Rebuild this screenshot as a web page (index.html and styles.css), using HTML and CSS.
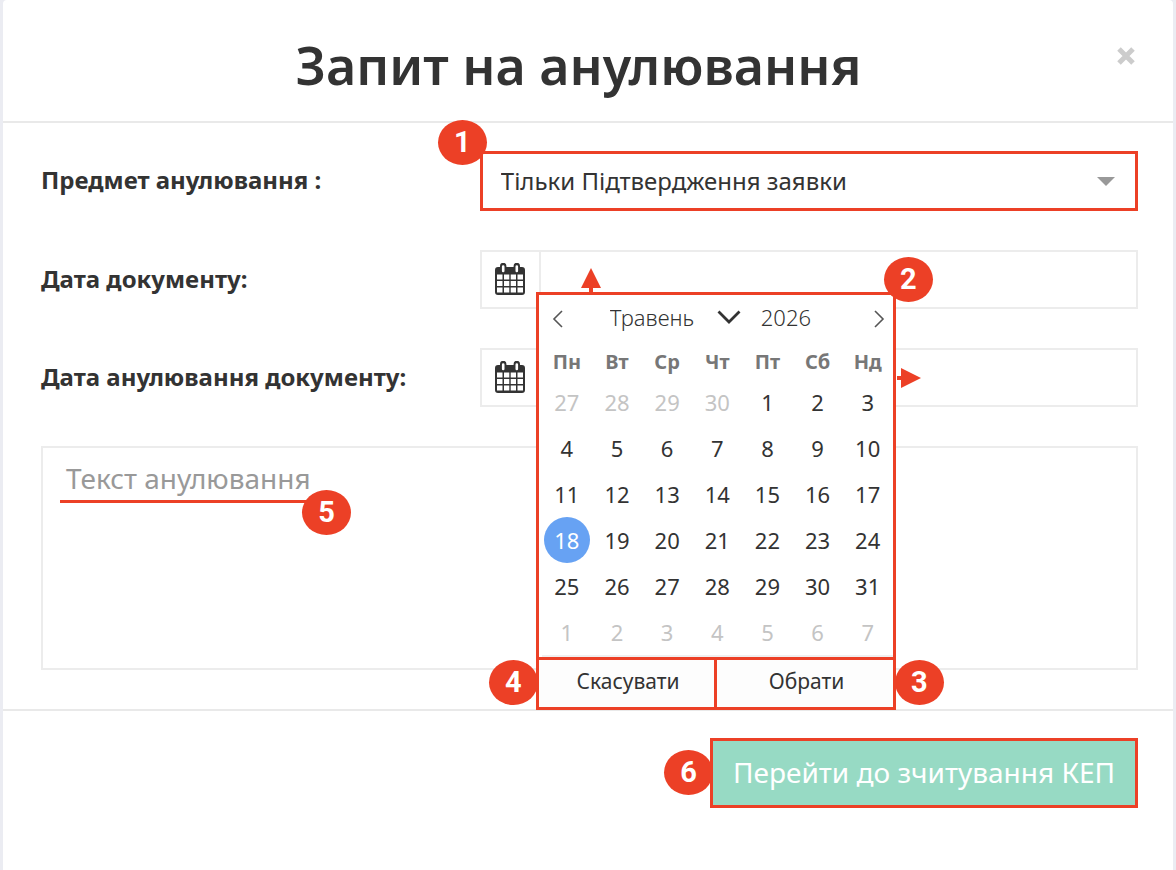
FILE: index.html
```html
<!DOCTYPE html>
<html lang="uk">
<head>
    <meta charset="UTF-8">
    <meta name="viewport" content="width=device-width, initial-scale=1.0">
    <title>Запит на анулювання</title>
    <link rel="stylesheet" href="styles.css">
</head>
<body>

    <svg width="0" height="0" class="sprite" aria-hidden="true">
        <symbol id="icon-calendar" viewBox="0 0 30 32">
            <path fill="#333" d="M3 4h2V3a3.200 3.200 0 0 1 6.400 0v1h7.200V3a3.200 3.200 0 0 1 6.400 0v1h2a3 3 0 0 1 3 3v22a3 3 0 0 1-3 3H3a3 3 0 0 1-3-3V7a3 3 0 0 1 3-3z"/>
            <path fill="#fff" d="M6.900 3.500a1.300 1.300 0 0 1 2.600 0v4.500a1.300 1.300 0 0 1-2.600 0zM20.500 3.500a1.300 1.300 0 0 1 2.600 0v4.500a1.300 1.300 0 0 1-2.600 0z"/>
            <path fill="#fff" d="M2 11.500h5.500v5H2zM9 11.500h5.300v5H9zM15.700 11.500H21v5h-5.300zM22.500 11.500H28v5h-5.500zM2 18h5.500v5H2zM9 18h5.300v5H9zM15.700 18H21v5h-5.300zM22.500 18H28v5h-5.500zM2 24.500h5.500v5H2zM9 24.500h5.300v5H9zM15.700 24.500H21v5h-5.300zM22.500 24.500H28v5h-5.500z"/>
        </symbol>
    </svg>

    <div class="modal">
        <div class="modal-header">
            <h1>Запит на анулювання</h1>
            <button class="close" type="button" aria-label="Закрити">
                <svg width="20" height="20" viewBox="0 0 20 20"><path d="M3 3l14 14M17 3L3 17" stroke="#ccc" stroke-width="5" fill="none"/></svg>
            </button>
        </div>

        <form class="modal-form">
            <div class="modal-body">
                <div class="form-row">
                    <label for="subject">Предмет анулювання :</label>
                    <div class="field select-field">
                        <select id="subject">
                            <option>Тільки Підтвердження заявки</option>
                        </select>
                        <svg class="caret" width="18" height="9" viewBox="0 0 18 9"><path d="M0 0h18L9 9z" fill="#999"/></svg>
                        <span class="marker marker-1">1</span>
                    </div>
                </div>

                <div class="form-row">
                    <label for="doc-date">Дата документу:</label>
                    <div class="field date-field">
                        <span class="addon"><svg width="30" height="32"><use href="#icon-calendar"/></svg></span>
                        <input type="text" id="doc-date">

                        <div class="datepicker">
                            <svg class="arrow-up" width="20" height="24" viewBox="0 0 20 24"><path d="M10 0l10 20h-8v4H8v-4H0z" fill="#ec4026"/></svg>
                            <svg class="arrow-right" width="24" height="20" viewBox="0 0 24 20"><path d="M24 10L4 20v-8H0V8h4V0z" fill="#ec4026"/></svg>
                            <div class="calendar">
                                <div class="months">
                                    <button class="nav" type="button" aria-label="Попередній місяць">
                                        <svg width="12" height="18" viewBox="0 0 12 18"><path d="M10 1L2 9l8 8" stroke="#555" stroke-width="1.600" fill="none"/></svg>
                                    </button>
                                    <div class="current">
                                        <div class="month">
                                            <select aria-label="Місяць">
                                                <option>Травень</option>
                                            </select>
                                            <svg width="24" height="14" viewBox="0 0 24 14"><path d="M1.500 1.500L12 12 22.500 1.500" stroke="#333" stroke-width="2.800" fill="none"/></svg>
                                        </div>
                                        <input class="year" type="text" value="2026" aria-label="Рік">
                                    </div>
                                    <button class="nav" type="button" aria-label="Наступний місяць">
                                        <svg width="12" height="18" viewBox="0 0 12 18"><path d="M2 1l8 8-8 8" stroke="#555" stroke-width="1.600" fill="none"/></svg>
                                    </button>
                                </div>
                                <div class="weekdays">
                                    <span>Пн</span><span>Вт</span><span>Ср</span><span>Чт</span><span>Пт</span><span>Сб</span><span>Нд</span>
                                </div>
                                <div class="days">
                                    <button type="button" class="other">27</button>
                                    <button type="button" class="other">28</button>
                                    <button type="button" class="other">29</button>
                                    <button type="button" class="other">30</button>
                                    <button type="button">1</button>
                                    <button type="button">2</button>
                                    <button type="button">3</button>
                                    <button type="button">4</button>
                                    <button type="button">5</button>
                                    <button type="button">6</button>
                                    <button type="button">7</button>
                                    <button type="button">8</button>
                                    <button type="button">9</button>
                                    <button type="button">10</button>
                                    <button type="button">11</button>
                                    <button type="button">12</button>
                                    <button type="button">13</button>
                                    <button type="button">14</button>
                                    <button type="button">15</button>
                                    <button type="button">16</button>
                                    <button type="button">17</button>
                                    <button type="button" class="selected">18</button>
                                    <button type="button">19</button>
                                    <button type="button">20</button>
                                    <button type="button">21</button>
                                    <button type="button">22</button>
                                    <button type="button">23</button>
                                    <button type="button">24</button>
                                    <button type="button">25</button>
                                    <button type="button">26</button>
                                    <button type="button">27</button>
                                    <button type="button">28</button>
                                    <button type="button">29</button>
                                    <button type="button">30</button>
                                    <button type="button">31</button>
                                    <button type="button" class="other">1</button>
                                    <button type="button" class="other">2</button>
                                    <button type="button" class="other">3</button>
                                    <button type="button" class="other">4</button>
                                    <button type="button" class="other">5</button>
                                    <button type="button" class="other">6</button>
                                    <button type="button" class="other">7</button>
                                </div>
                            </div>
                            <div class="actions">
                                <button type="button">Скасувати</button>
                                <button type="button">Обрати</button>
                            </div>
                            <span class="marker marker-2">2</span>
                            <span class="marker marker-3">3</span>
                            <span class="marker marker-4">4</span>
                        </div>
                    </div>
                </div>

                <div class="form-row">
                    <label for="cancel-date">Дата анулювання документу:</label>
                    <div class="field date-field">
                        <span class="addon"><svg width="30" height="32"><use href="#icon-calendar"/></svg></span>
                        <input type="text" id="cancel-date">
                    </div>
                </div>

                <div class="text-field">
                    <textarea placeholder="Текст анулювання" aria-label="Текст анулювання"></textarea>
                    <span class="underline"></span>
                    <span class="marker marker-5">5</span>
                </div>
            </div>

            <div class="modal-footer">
                <div class="submit-wrap">
                    <button class="submit" type="submit">Перейти до зчитування КЕП</button>
                    <span class="marker marker-6">6</span>
                </div>
            </div>
        </form>
    </div>

</body>
</html>
```

FILE: styles.css
```css
* {
    margin: 0;
    padding: 0;
    box-sizing: border-box;
}

body {
    background-color: #ebecf2;
    font-family: "Noto Sans", "Open Sans", sans-serif;
    font-size: 24px;
    color: #333;
}

button,
input,
select,
textarea {
    font: inherit;
    color: inherit;
    border: none;
    background: none;
    outline: none;
}

button {
    cursor: pointer;
}

svg {
    display: block;
}

.sprite {
    position: absolute;
}

.modal {
    min-height: 100vh;
    margin: 0 3px;
    background-color: #fff;
    border-radius: 4px 4px 0 0;
}

.modal-header {
    display: flex;
    align-items: flex-start;
    padding: 29px 37px 20px 38px;
    border-bottom: 2px solid #e9e9e9;
}

.modal-header h1 {
    flex: 1;
    font-size: 52px;
    line-height: 72px;
    font-weight: 600;
    text-align: center;
}

.close {
    margin-top: 17px;
}

.modal-body {
    display: flex;
    flex-direction: column;
    gap: 39px;
    padding: 28px 35px 39px 38px;
}

.form-row {
    display: grid;
    grid-template-columns: 2fr 3fr;
    align-items: center;
}

.form-row label {
    padding-bottom: 3px;
    font-weight: bold;
}

.field {
    position: relative;
    display: flex;
    align-items: center;
}

.select-field select {
    appearance: none;
    width: 100%;
    height: 60px;
    padding: 0 18px 2px;
    border: 3px solid #ec4026;
}

.caret {
    position: absolute;
    right: 23px;
    pointer-events: none;
}

.date-field {
    height: 59px;
    border: 2px solid #ececec;
}

.date-field > input {
    flex: 1;
    min-width: 0;
    height: 100%;
    padding: 0 18px;
}

.addon {
    display: flex;
    align-items: center;
    justify-content: center;
    width: 59px;
    height: 100%;
    padding-bottom: 2px;
    border-right: 2px solid #ececec;
}

/* datepicker */
.datepicker {
    position: absolute;
    top: 40px;
    left: 54px;
    z-index: 10;
    width: 360px;
}

.calendar {
    padding-left: 3px;
    border: 3px solid #ec4026;
    background-color: #fff;
}

.months {
    display: flex;
    align-items: center;
    justify-content: space-between;
    height: 44px;
    padding: 4px 8px 0 10px;
}

.current {
    display: flex;
    align-items: center;
    gap: 20px;
    padding-bottom: 4px;
    font-size: 22px;
    font-weight: 300;
}

.month {
    display: flex;
    align-items: center;
    gap: 22px;
}

.month select {
    appearance: none;
}

.year {
    width: 66px;
}

.weekdays,
.days {
    display: grid;
    grid-template-columns: repeat(7, 1fr);
    justify-items: center;
}

.weekdays {
    height: 40px;
    padding-top: 4px;
    align-items: center;
    font-size: 20px;
    font-weight: bold;
    color: #777;
}

.days {
    border-bottom: 2px solid #f0f0f0;
    font-size: 22px;
}

.days button {
    width: 46px;
    height: 46px;
    border-radius: 50%;
}

.days .other {
    color: #c4c4c4;
}

.days .selected {
    background-color: #67a2f3;
    color: #fff;
}

.actions {
    display: flex;
    margin-top: -3px;
    border: 3px solid #ec4026;
    background-color: #fdfdfd;
}

.actions button {
    flex: 1;
    height: 47px;
    padding: 0 0 6px 3px;
    font-size: 21px;
}

.actions button + button {
    border-left: 3px solid #ec4026;
}

.arrow-up {
    position: absolute;
    top: -24px;
    left: 45px;
}

.arrow-right {
    position: absolute;
    top: 76px;
    right: -25px;
}

.text-field {
    position: relative;
    display: flex;
}

.text-field textarea {
    flex: 1;
    height: 224px;
    padding: 11px 23px;
    border: 2px solid #ececec;
    font-size: 28px;
    resize: none;
}

.text-field textarea::placeholder {
    color: #999;
}

.underline {
    position: absolute;
    top: 54px;
    left: 19px;
    width: 260px;
    height: 3px;
    background-color: #ec4026;
}

.modal-footer {
    display: flex;
    justify-content: flex-end;
    padding: 27px 35px;
    border-top: 2px solid #e9e9e9;
}

.submit-wrap {
    position: relative;
}

.submit {
    height: 70px;
    padding: 0 20px 2px;
    border: 3px solid #ec4026;
    background-color: #97dac4;
    color: #fff;
    font-size: 28px;
}

/* numbered markers */
.marker {
    position: absolute;
    width: 49px;
    height: 45px;
    border-radius: 50%;
    background-color: #ec4026;
    color: #fff;
    font: bold 29px/45px Roboto, "Liberation Sans", sans-serif;
    text-align: center;
}

.marker-1 {
    top: -31px;
    left: -42px;
}

.marker-2 {
    top: -35px;
    right: -37px;
}

.marker-3 {
    bottom: 5px;
    right: -48px;
}

.marker-4 {
    bottom: 5px;
    left: -47px;
}

.marker-5 {
    top: 44px;
    left: 261px;
}

.marker-6 {
    top: 12px;
    left: -46px;
}
```
